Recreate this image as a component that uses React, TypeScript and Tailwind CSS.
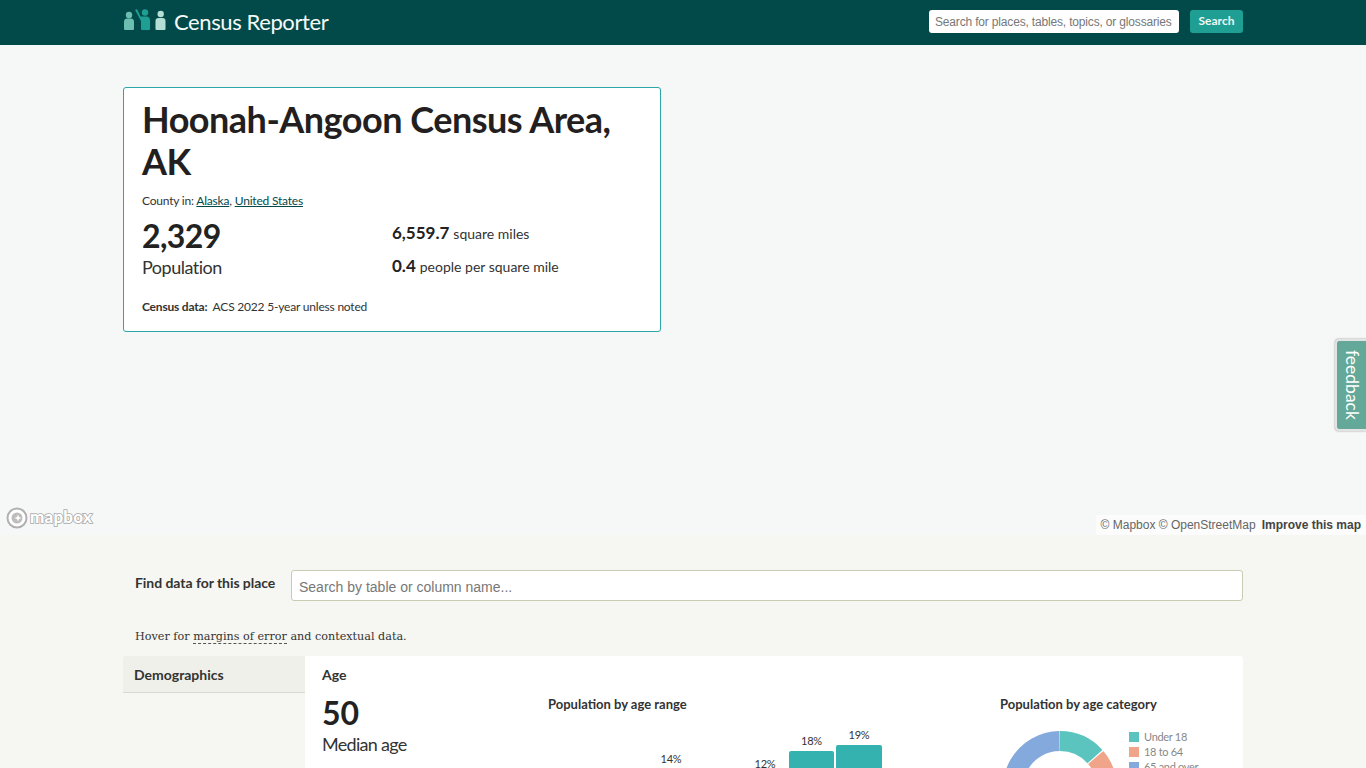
function Logo() {
  return (
    <svg width="44" height="24" viewBox="0 0 44 24" className="mb-[3px]" aria-hidden>
      <circle cx="6" cy="7" r="3.2" fill="#6cbfb0" />
      <path d="M1 14q0-3.500 3-3.500h4q3 0 3 3.500v7q0 1-1 1H2q-1 0-1-1z" fill="#6cbfb0" />
      <path d="M12 2l2-1 3.500 7.500H23q4 0 4 4V21q0 1-1 1h-7q-1 0-1-1v-8z" fill="#1f9e94" />
      <circle cx="22" cy="4.500" r="3.200" fill="#1f9e94" />
      <circle cx="37.700" cy="6" r="3.200" fill="#b5ded4" />
      <path d="M32.500 13q0-3 3-3h4q3 0 3 3v8q0 1-1 1h-8q-1 0-1-1z" fill="#b5ded4" />
    </svg>
  );
}

function MapboxLogo() {
  return (
    <svg width="90" height="24" viewBox="0 0 90 24" aria-hidden>
      <circle cx="11" cy="12" r="9.500" fill="#fff" stroke="#b0b0b0" strokeWidth="2" />
      <circle cx="11" cy="12" r="5.500" fill="#bdbdbd" />
      <path d="M12 8.500l1 2.500 2.500 1-2.500 1-1 2.500-1-2.500-2.500-1 2.500-1z" fill="#fff" />
      <text
        x="24"
        y="17"
        fontFamily="Lato, sans-serif"
        fontWeight="900"
        fontSize="17"
        letterSpacing="0.2"
        fill="#fff"
        stroke="#a8a8a8"
        strokeWidth="1.600"
        className="[paint-order:stroke]"
      >
        mapbox
      </text>
    </svg>
  );
}

function Donut() {
  return (
    <svg width="116" height="116" viewBox="0 0 116 116" aria-hidden>
      <path d="M58 1A57 57 0 0 1 100.400 19.900L85.500 33.200A37 37 0 0 0 58 21z" fill="#5bc4bf" />
      <path d="M101.300 21A57 57 0 1 1 8.600 86.500L26 76.500A37 37 0 1 0 86.100 34z" fill="#f0a58a" />
      <path d="M8.100 85.600A57 57 0 0 1 57.500 1L57.700 21A37 37 0 0 0 25.600 75.900z" fill="#84a9dc" />
    </svg>
  );
}

function Header() {
  return (
    <header className="h-[45px] bg-[#024a4a]">
      <div className="mx-auto flex h-full w-[1120px] items-center justify-between">
        <a className="flex items-center gap-[7px] pb-[2px] font-['Lato'] text-[22px] tracking-[-0.4px] text-[#f6fbf8]">
          <Logo />
          Census Reporter
        </a>
        <div className="flex items-center gap-[11px] pb-[3px]">
          <div className="flex h-[23px] w-[250px] items-center rounded-[3px] bg-white px-[6px] pt-[2px] font-['Liberation_Sans'] text-[12px] tracking-[-0.17px] whitespace-nowrap text-[#777]">
            Search for places, tables, topics, or glossaries
          </div>
          <button className="h-[23px] w-[53px] rounded-[3px] bg-[#1f9e94] font-['Lato'] text-[12px] font-bold text-[#eef8f5]">
            Search
          </button>
        </div>
      </div>
    </header>
  );
}

function Card() {
  return (
    <div className="h-[245px] w-[538px] rounded-[3px] border border-[#2ba8a5] bg-white px-[18px] pt-[10px] font-['Lato'] text-[#222]">
      <h1 className="text-[36px] leading-[42px] font-bold tracking-[-0.5px] text-[#231f20]">Hoonah-Angoon Census Area, AK</h1>
      <p className="mt-[11px] text-[12px] leading-[16px] tracking-[-0.2px] text-[#333]">
        County in: <span className="text-[#024a4a] underline">Alaska</span>,{" "}
        <span className="text-[#024a4a] underline">United States</span>
      </p>
      <div className="mt-[8px] flex">
        <div className="w-[250px]">
          <div className="text-[32px] leading-[38px] font-bold tracking-[-0.6px]">2,329</div>
          <div className="mt-[1px] text-[18px] leading-[22px] tracking-[-0.5px] text-[#333]">Population</div>
        </div>
        <div className="pt-[6px] text-[14px] text-[#333]">
          <div className="flex items-baseline gap-[4px] leading-[20px]">
            <b className="text-[17px] text-[#222]">6,559.7</b> square miles
          </div>
          <div className="mt-[12px] flex items-baseline gap-[4px] leading-[20px]">
            <b className="text-[17px] text-[#222]">0.4</b> people per square mile
          </div>
        </div>
      </div>
      <p className="mt-[21px] text-[12px] leading-[16px] tracking-[-0.2px] text-[#333]">
        <b>Census data:</b>&nbsp; ACS 2022 5-year unless noted
      </p>
    </div>
  );
}

function AgeChart() {
  return (
    <div className="relative h-[64px] w-[360px] text-center text-[11px] tracking-[-0.2px] text-[#333]">
      <span className="absolute top-[38px] left-[100px] w-[46px]">14%</span>
      <span className="absolute top-[43px] left-[194px] w-[46px]">12%</span>
      <div className="absolute top-[20px] left-[241px] w-[45px]">
        18%
        <div className="mt-[1px] h-[60px] rounded-t-[2px] bg-[#33b2b0]" />
      </div>
      <div className="absolute top-[14px] left-[288px] w-[46px]">
        19%
        <div className="mt-[1px] h-[60px] rounded-t-[2px] bg-[#33b2b0]" />
      </div>
    </div>
  );
}

export default function App() {
  return (
    <div className="h-[768px] overflow-hidden bg-[#f6f7f2]">
      <Header />
      <section className="relative h-[490px] bg-[#f6f8f7] pt-[42px]">
        <div className="mx-auto w-[1120px]">
          <Card />
        </div>
        <div className="absolute bottom-[5px] left-[6px]">
          <MapboxLogo />
        </div>
        <div className="absolute right-0 bottom-0 flex h-[20px] items-center gap-[6px] bg-[#fbfcfb] pr-[5px] pl-[5px] font-['Liberation_Sans'] text-[12px] text-[#666]">
          <span>© Mapbox © OpenStreetMap</span>
          <span className="font-bold text-[#444]">Improve this map</span>
        </div>
        <div className="absolute top-[294px] right-0 flex h-[92px] w-[31px] items-center justify-center rounded-l-[4px] border-2 border-r-0 border-[#e3e3e3] bg-[#63a898] shadow-[0_0_2px_#888]">
          <span className="font-['Lato'] text-[17.500px] text-white [writing-mode:vertical-rl]">feedback</span>
        </div>
      </section>
      <main className="mx-auto w-[1120px]">
        <div className="flex items-center pt-[35px] pl-[12px]">
          <h2 className="w-[156px] pb-[7px] font-['Lato'] text-[14px] font-bold tracking-[-0.05px] text-[#333]">Find data for this place</h2>
          <div className="flex h-[31px] flex-1 items-center rounded-[3px] border border-[#c9ccb0] bg-white px-[7px] pt-[3px] font-['Liberation_Sans'] text-[14px] text-[#777]">
            Search by table or column name...
          </div>
        </div>
        <p className="mt-[28px] pl-[12px] font-['DejaVu_Serif'] text-[11.200px] leading-[16px] text-[#333]">
          Hover for <span className="border-b border-dashed border-[#555]">margins of error</span> and contextual data.
        </p>
        <div className="mt-[11px] flex">
          <nav className="h-[37px] w-[182px] rounded-tl-[3px] border-b border-[#d8d8d0] bg-[#f0f0ea] pt-[8px] pl-[11px] font-['Lato'] text-[14px] font-bold text-[#333]">
            Demographics
          </nav>
          <div className="flex h-[120px] flex-1 rounded-tr-[3px] bg-white pt-[10px] pl-[17px] font-['Lato'] text-[#222]">
            <div className="w-[226px]">
              <h3 className="text-[14px] leading-[18px] font-bold text-[#333]">Age</h3>
              <div className="mt-[10px] text-[32px] leading-[38px] font-bold">50</div>
              <div className="mt-[1px] text-[18px] leading-[22px] tracking-[-0.7px] text-[#333]">Median age</div>
            </div>
            <div className="w-[452px] pt-[29px]">
              <h4 className="text-[13px] leading-[18px] font-bold text-[#333]">Population by age range</h4>
              <AgeChart />
            </div>
            <div className="pt-[29px]">
              <h4 className="text-[13px] leading-[18px] font-bold text-[#333]">Population by age category</h4>
              <div className="mt-[17px] flex gap-[11px] pl-[2px]">
                <Donut />
                <ul className="mt-[-1px] text-[11px] leading-[15px] tracking-[-0.3px] text-[#888]">
                  <li className="flex items-center gap-[5px]"><i className="size-[10px] bg-[#5bc4bf]" />Under 18</li>
                  <li className="flex items-center gap-[5px]"><i className="size-[10px] bg-[#f0a58a]" />18 to 64</li>
                  <li className="flex items-center gap-[5px]"><i className="size-[10px] bg-[#84a9dc]" />65 and over</li>
                </ul>
              </div>
            </div>
          </div>
        </div>
      </main>
    </div>
  );
}
